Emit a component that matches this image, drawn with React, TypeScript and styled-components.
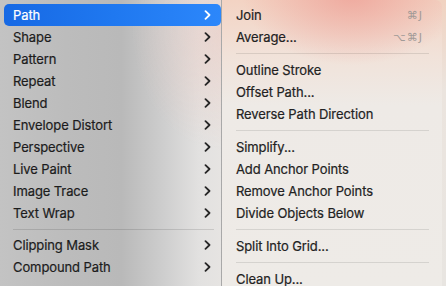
import React from "react";
import styled, { createGlobalStyle } from "styled-components";

const Global = createGlobalStyle`
  html, body { margin: 0; padding: 0; }
  body {
    width: 446px;
    height: 286px;
    overflow: hidden;
    background: linear-gradient(180deg, #f1d2c0 0px, #ebe4de 90px, #e8e5e1 286px);
    font-family: Inter, "Noto Sans", "DejaVu Sans", sans-serif;
    -webkit-font-smoothing: antialiased;
  }
`;

const Screen = styled.div`
  display: flex;
  width: 446px;
  height: 286px;
`;

const LeftMenu = styled.div`
  width: 222px;
  flex: none;
  display: flex;
  flex-direction: column;
  padding-top: 4px;
  box-sizing: border-box;
  border-right: 1px solid rgba(0, 0, 0, 0.13);
  background:
    radial-gradient(ellipse 90px 120px at 222px 30px, rgba(238, 200, 190, 0.55), rgba(238, 200, 190, 0)),
    linear-gradient(90deg, #c3c3c3 0%, #bcbcbc 30%, #b9b9b9 55%, #cfcfcf 75%, #e2e1e0 90%, #e6e4e2 100%);
`;

const RightMenu = styled.div`
  width: 220px;
  flex: none;
  display: flex;
  flex-direction: column;
  padding-top: 4px;
  box-sizing: border-box;
  border-top-right-radius: 7px;
  background:
    radial-gradient(ellipse 110px 70px at 130px -5px, rgba(238, 160, 150, 0.8), rgba(238, 160, 150, 0)),
    linear-gradient(180deg, #f3d3c3 0px, #f1e2d9 55px, #eeeae6 105px, #eeebe7 286px);
`;

const Row = styled.div<{ $active?: boolean; $side: "left" | "right" }>`
  height: 22px;
  flex: none;
  display: flex;
  align-items: center;
  box-sizing: border-box;
  margin-left: ${(p) => (p.$side === "left" ? "4px" : "5px")};
  margin-right: ${(p) => (p.$side === "left" ? "0" : "5px")};
  padding-left: 9px;
  padding-right: ${(p) => (p.$side === "left" ? "10px" : "14px")};
  border-radius: 5px;
  font-size: 13px;
  letter-spacing: -0.1px;
  -webkit-text-stroke: 0.2px currentColor;
  color: ${(p) => (p.$active ? "#ffffff" : p.$side === "left" ? "#1c1c1c" : "#222222")};
  background: ${(p) => (p.$active ? "linear-gradient(90deg, #1769e4 0%, #1f78f0 50%, #2c87fb 100%)" : "transparent")};
`;

const Label = styled.span`
  flex: 1;
  white-space: nowrap;
`;

const Shortcut = styled.span`
  color: #a19a97;
  font-family: "DejaVu Sans", "Noto Sans", sans-serif;
  font-size: 11px;
  letter-spacing: 1px;
  -webkit-text-stroke: 0;
`;

const Separator = styled.div<{ $h: number; $side: "left" | "right" }>`
  height: ${(p) => p.$h}px;
  flex: none;
  display: flex;
  align-items: center;
  padding-left: ${(p) => (p.$side === "left" ? "13px" : "14px")};
  padding-right: ${(p) => (p.$side === "left" ? "7px" : "13px")};
  &::after {
    content: "";
    flex: 1;
    height: 1px;
    background: ${(p) => (p.$side === "left" ? "rgba(0,0,0,0.12)" : "rgba(0,0,0,0.1)")};
  }
`;

const Chevron = ({ color }: { color: string }) => (
  <svg width="7" height="10" viewBox="0 0 7 10" style={{ flex: "none" }}>
    <path d="M1.5 1.2 L5.5 5 L1.5 8.8" fill="none" stroke={color} strokeWidth="1.8" strokeLinecap="round" strokeLinejoin="round" />
  </svg>
);

type Item = { label: string; shortcut?: string } | "sep";

const leftItems: Item[] = [
  { label: "Path" },
  { label: "Shape" },
  { label: "Pattern" },
  { label: "Repeat" },
  { label: "Blend" },
  { label: "Envelope Distort" },
  { label: "Perspective" },
  { label: "Live Paint" },
  { label: "Image Trace" },
  { label: "Text Wrap" },
  "sep",
  { label: "Clipping Mask" },
  { label: "Compound Path" },
];

const rightItems: Item[] = [
  { label: "Join", shortcut: "⌘J" },
  { label: "Average...", shortcut: "⌥⌘J" },
  "sep",
  { label: "Outline Stroke" },
  { label: "Offset Path..." },
  { label: "Reverse Path Direction" },
  "sep",
  { label: "Simplify..." },
  { label: "Add Anchor Points" },
  { label: "Remove Anchor Points" },
  { label: "Divide Objects Below" },
  "sep",
  { label: "Split Into Grid..." },
  "sep",
  { label: "Clean Up..." },
];

export default function App() {
  return (
    <>
      <Global />
      <Screen>
        <LeftMenu>
          {leftItems.map((it, i) =>
            it === "sep" ? (
              <Separator key={i} $h={10} $side="left" />
            ) : (
              <Row key={i} $side="left" $active={i === 0}>
                <Label>{it.label}</Label>
                <Chevron color={i === 0 ? "#ffffff" : "#262626"} />
              </Row>
            )
          )}
        </LeftMenu>
        <RightMenu>
          {rightItems.map((it, i) =>
            it === "sep" ? (
              <Separator key={i} $h={11} $side="right" />
            ) : (
              <Row key={i} $side="right">
                <Label>{it.label}</Label>
                {it.shortcut && <Shortcut>{it.shortcut}</Shortcut>}
              </Row>
            )
          )}
        </RightMenu>
      </Screen>
    </>
  );
}
